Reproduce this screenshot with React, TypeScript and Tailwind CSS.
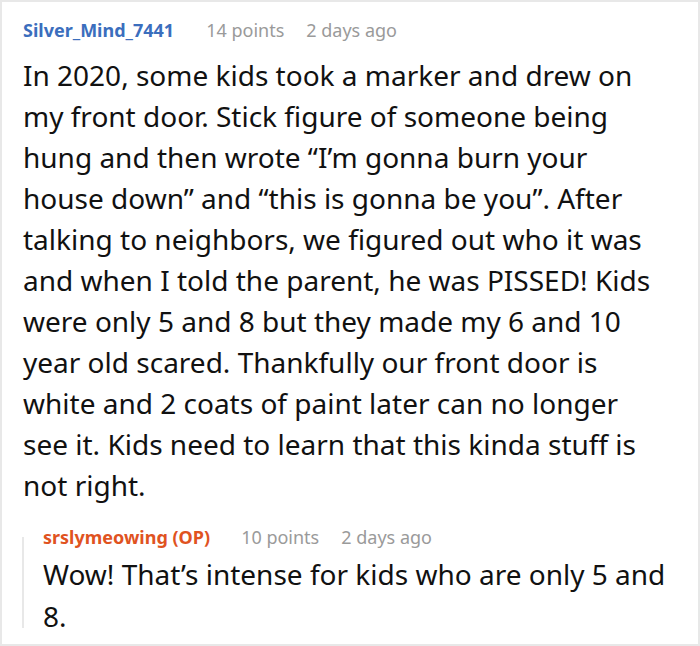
export default function App() {
  return (
    <div className="w-[700px] h-[646px] bg-white border-2 border-[#e8e8e8] font-['Noto_Sans',sans-serif] text-[#111]">
      {/* Comment */}
      <div className="pl-[21px] pr-[40px] pt-[16px]">
        <div className="flex items-baseline text-[18px] leading-[24px]">
          <span className="font-bold text-[#3b6ebd]">Silver_Mind_7441</span>
          <span className="ml-[32px] text-[#9a9a9a]">14 points</span>
          <span className="ml-[22px] text-[#9a9a9a]">2 days ago</span>
        </div>
        <p className="mt-[13px] text-[28px] leading-[41px]">
          In 2020, some kids took a marker and drew on my front door. Stick figure of someone being hung and then wrote “I’m gonna burn your house down” and “this is gonna be you”. After talking to neighbors, we figured out who it was and when I told the parent, he was PISSED! Kids were only 5 and 8 but they made my 6 and 10 year old scared. Thankfully our front door is white and 2 coats of paint later can no longer see it. Kids need to learn that this kinda stuff is not right.
        </p>
      </div>

      {/* Reply */}
      <div className="ml-[20px] mt-[19px] pl-[21px] pr-[20px] bg-[linear-gradient(#e8e8e8,#e8e8e8)] bg-no-repeat bg-[length:2px_91px] bg-[position:0_12px]">
        <div className="flex items-baseline text-[18px] leading-[24px]">
          <span className="font-bold text-[#e0531f]">srslymeowing (OP)</span>
          <span className="ml-[31px] text-[#9a9a9a]">10 points</span>
          <span className="ml-[22px] text-[#9a9a9a]">2 days ago</span>
        </div>
        <p className="mt-[4px] text-[28px] leading-[42px]">
          Wow! That’s intense for kids who are only 5 and 8.
        </p>
      </div>
    </div>
  );
}
